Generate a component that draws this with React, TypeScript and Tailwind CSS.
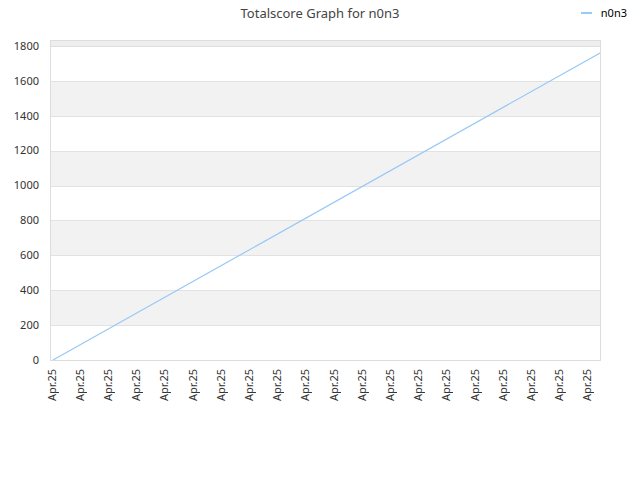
const yLabels = ["1800", "1600", "1400", "1200", "1000", "800", "600", "400", "200", "0"];
const bands = ["bg-white", "bg-[#f2f2f2]", "bg-white", "bg-[#f2f2f2]", "bg-white", "bg-[#f2f2f2]", "bg-white", "bg-[#f2f2f2]", "bg-white"];
const xLabels = Array.from({ length: 20 }, () => "Apr.25");

export default function App() {
  return (
    <div className="relative w-[640px] h-[480px] bg-white text-[#333] font-['DejaVu_Sans',sans-serif]">
      <div className="h-[40px] flex justify-center pt-[4px] text-[13px] text-[#444]">
        Totalscore Graph for n0n3
      </div>
      <div className="absolute right-[13px] top-[5px] flex items-center gap-[9px] text-[11px] text-black">
        <span className="block w-[11px] h-[2px] bg-[#99c9f5]" />
        n0n3
      </div>

      <div className="flex">
        <div className="w-[50px] h-[320px] pt-[6px] flex flex-col justify-between items-end pr-[11px] text-[11px]">
          {yLabels.map((l) => (
            <div key={l} className="h-0 flex items-center">{l}</div>
          ))}
        </div>
        <div className="relative w-[551px] h-[321px] border border-[#ddd] flex flex-col">
          <div className="h-[6px] bg-[#eeeeee] border-b border-[#ddd]" />
          {bands.map((b, i) => (
            <div key={i} className={`flex-1 ${b} ${i < bands.length - 1 ? "border-b border-[#e2e2e2]" : ""}`} />
          ))}
          <svg className="absolute inset-0" width="549" height="319">
            <line x1="2" y1="319" x2="549" y2="12" stroke="#99c9f5" strokeWidth="1.2" />
          </svg>
        </div>
      </div>

      <div className="ml-[51px] w-[536px] flex justify-between pt-[8px]">
        {xLabels.map((l, i) => (
          <div key={i} className="w-0 flex justify-center">
            <span className="[writing-mode:vertical-rl] rotate-180 text-[11px] leading-none">{l}</span>
          </div>
        ))}
      </div>
    </div>
  );
}
